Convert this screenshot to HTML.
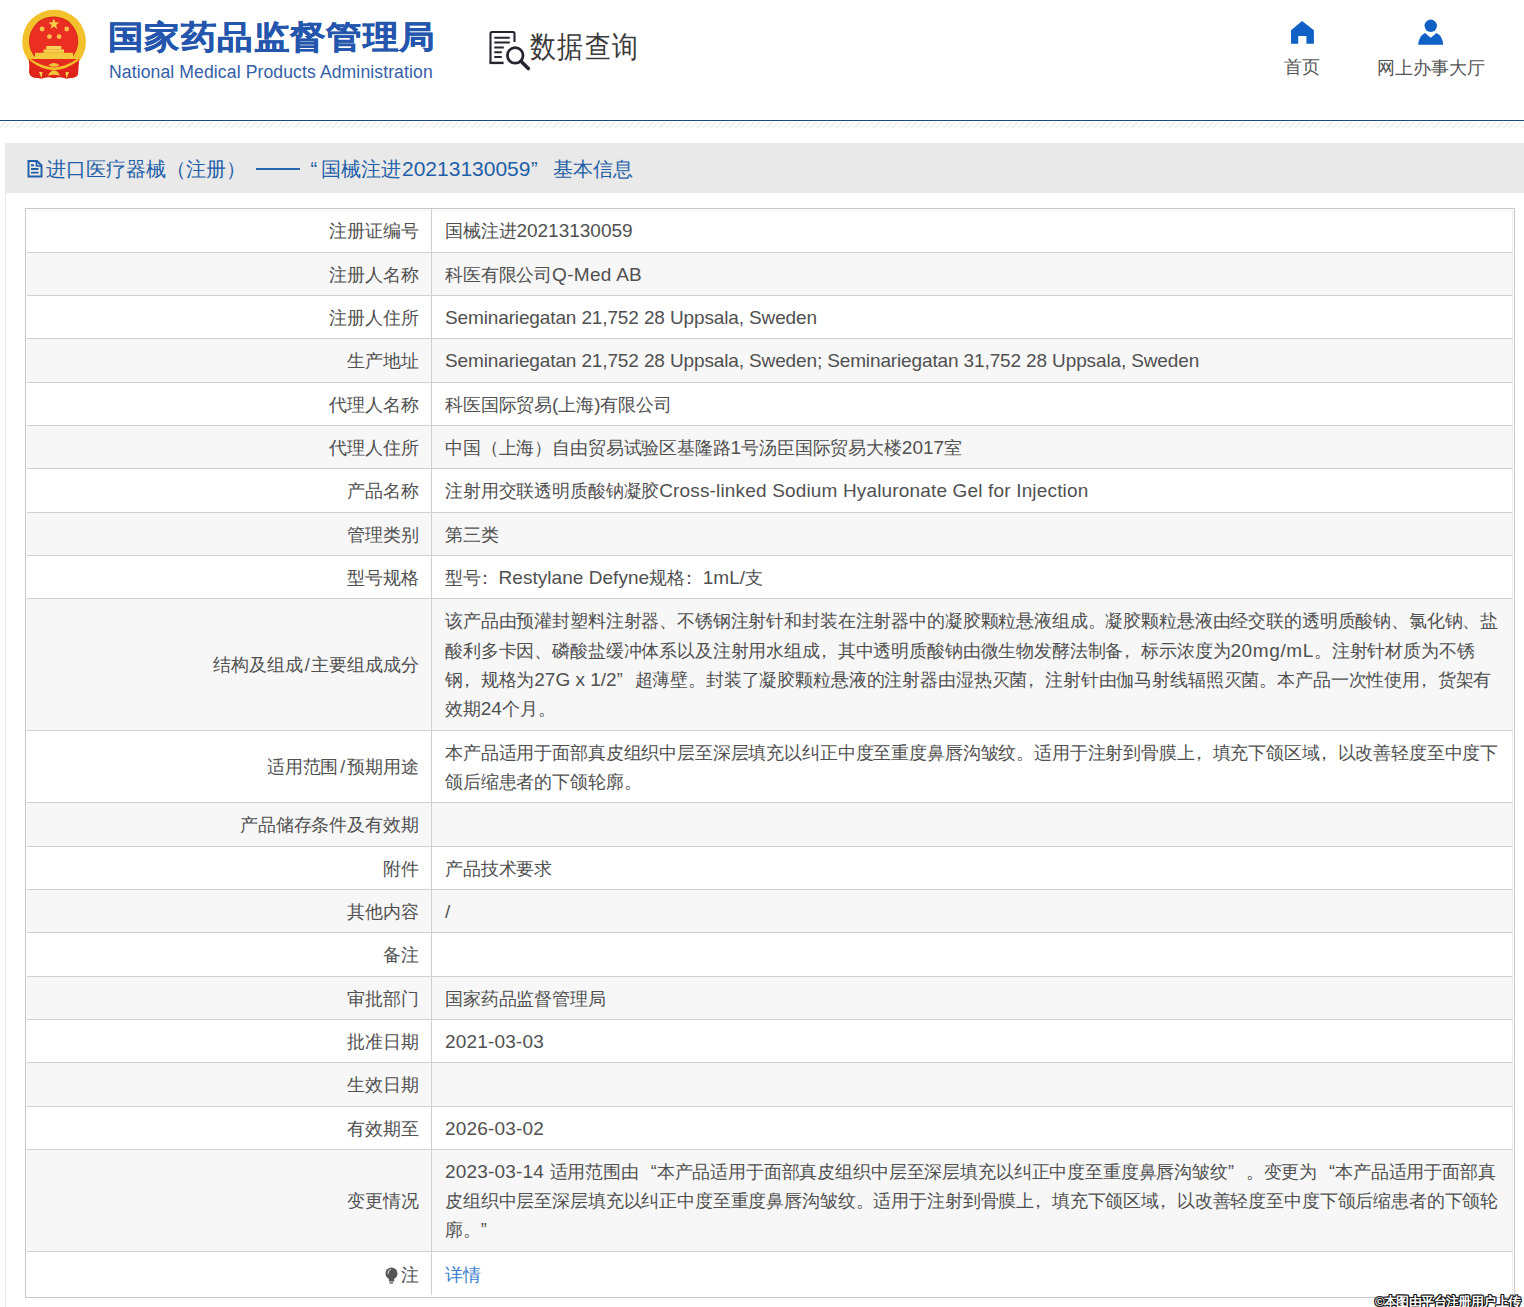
<!DOCTYPE html>
<html><head><meta charset="utf-8">
<style>
html,body{margin:0;padding:0;}
body{width:1524px;height:1307px;overflow:hidden;position:relative;background:#fff;font-family:"Liberation Sans",sans-serif;color:#555;}
.a{position:absolute;white-space:nowrap;}
#brand{left:108px;top:14px;font-size:36px;font-weight:bold;color:#2356ac;line-height:44px;letter-spacing:0.4px;transform:scaleY(0.9);transform-origin:0 33px;-webkit-text-stroke:0.5px #2356ac;}
#brand-en{left:109px;top:61px;font-size:17.6px;letter-spacing:0.1px;color:#3560a8;line-height:22px;}
#dq{left:530px;top:26.6px;font-size:26px;color:#3a3a3a;line-height:40px;letter-spacing:1.3px;transform:scaleY(1.16);transform-origin:0 20px;}
.nav{font-size:18px;color:#555;line-height:22px;}
#stripe{left:0;top:120px;width:1524px;height:1px;background:#1b4a80;}
#hatch{left:0;top:122px;width:1524px;height:6px;background:repeating-linear-gradient(135deg,#fff 0,#fff 2.2px,#f5f2f2 2.2px,#f5f2f2 4.45px);}
#frame{left:5px;top:143px;width:1600px;height:1300px;border-left:1px solid #e8e8e8;}
#bar{left:5px;top:143px;width:1519px;height:50px;background:#e9e9e9;}
.tt{top:154px;font-size:20px;color:#1f5fa8;line-height:30px;}
#tbl{left:25px;top:208px;width:1488px;height:1088px;border:1px solid #c8c8c8;}
.row{position:absolute;left:27px;width:1486px;border-top:1px solid #d0d0d0;border-right:1px solid #ececec;box-sizing:border-box;}
.g{background:#f7f7f7;}
.lab{position:absolute;left:0;width:391.6px;top:2.6px;bottom:0;display:flex;align-items:center;justify-content:flex-end;white-space:nowrap;}
.val{position:absolute;left:418px;top:2.6px;bottom:0;display:flex;align-items:center;white-space:nowrap;}
.row{font-size:18px;letter-spacing:-0.15px;line-height:29.3px;color:#505050;}
#vline{left:431px;top:209px;width:1px;height:1086px;background:#d0d0d0;}
.sl{font-style:normal;margin:0 2px;}
.pl{font-style:normal;position:relative;left:-5px;}
#wm{left:1375px;top:1292.5px;font-size:13px;font-weight:bold;color:#fff;letter-spacing:-0.6px;line-height:18px;text-shadow:1px 0 #111,-1px 0 #111,0 1px #111,0 -1px #111,1px 1px #111,-1px -1px #111,1px -1px #111,-1px 1px #111;}
.en{font-size:19px;letter-spacing:0;line-height:0;}
.lq{display:inline-block;width:17.85px;text-align:right;}
.rq{display:inline-block;width:17.85px;text-align:left;}
</style></head><body>

<!-- emblem -->
<svg class="a" style="left:0;top:0" width="100" height="90" viewBox="0 0 100 90">
  <path d="M30.5 58 L29 72 Q29.5 76.5 34 77.5 L42 78.5 Q48 76 54 78 Q60 76 66 78.5 L74 77.5 Q78.5 76.5 78 72 L77 58 Z" fill="#df2519"/>
  <circle cx="54.1" cy="41.6" r="31.9" fill="#f3c12b"/>
  <circle cx="53.6" cy="41.1" r="24.6" fill="#c8201a"/>
  <circle cx="53.6" cy="41.1" r="23.9" fill="#ea2f22"/>
  <polygon points="53.9,18.4 55.3,22.3 59.4,22.4 56.1,24.9 57.3,28.9 53.9,26.5 50.5,28.9 51.7,24.9 48.4,22.4 52.5,22.3" fill="#f7d04a"/>
  <circle cx="42.1" cy="29" r="2.4" fill="#f6c24c"/><circle cx="66.7" cy="29" r="2.4" fill="#f6c24c"/>
  <circle cx="49.4" cy="36.6" r="2.4" fill="#f6c24c"/><circle cx="59.1" cy="36.6" r="2.4" fill="#f6c24c"/>
  <rect x="46.3" y="46" width="15" height="3.6" fill="#f7d35a"/>
  <rect x="43.5" y="49.4" width="20.5" height="3.4" fill="#f5cf4a"/>
  <rect x="35" y="52.8" width="38" height="6.2" fill="#f3c93e"/>
  <path d="M30.5 58.9 H77 Q66 67.5 54 68 Q42 67.5 30.5 58.9 Z" fill="#e52a1e"/>
  <path d="M29 58 Q41 66.5 54 67.6 Q67 66.5 78.5 58 L77 61.2 Q66 69.8 54 70.2 Q42 69.8 30.6 61.2 Z" fill="#f3c02a"/>
  <path d="M48.5 65.2 Q54 60.6 59.5 65.2 Q54 68.4 48.5 65.2 Z" fill="#f1c53a"/>
  <path d="M28.8 58.6 L30.6 61.2 Q42 69.8 54 70.2 Q66 69.8 77.5 61.2 L79.2 58.6 L78.2 72 Q78 76.5 74 77.5 L66 78.5 Q60 76.5 54 78 Q48 76.5 42 78.5 L34 77.5 Q30 76.5 29.8 72 Z" fill="#df2519"/>
  <path d="M48 75.8 Q50 70.3 54 70.2 Q58 70.3 60 75.8 Q54 73.6 48 75.8 Z" fill="#f4c63e"/>
  <path d="M39 72 L42.5 72 L41.5 78.5 Z M65.5 72 L69 72 L66.5 78.5 Z" fill="#f4d050"/>
</svg>

<div class="a" id="brand">国家药品监督管理局</div>
<div class="a" id="brand-en">National Medical Products Administration</div>

<!-- data query icon -->
<svg class="a" style="left:486px;top:28px" width="48" height="44" viewBox="0 0 48 44">
  <path d="M4.5 35 V5.5 Q4.5 4 6 4 H27 Q28.5 4 28.5 5.5 V14" fill="none" stroke="#24242e" stroke-width="2.1"/>
  <path d="M3.5 34.9 H17.6" stroke="#24242e" stroke-width="2.4"/>
  <path d="M8.3 9.8 H23.8 M8.3 14.6 H23.8 M8.3 19.4 H17.8 M8.3 24.2 H15.8 M8.3 29 H15.8" stroke="#24242e" stroke-width="2"/>
  <circle cx="29.2" cy="27.4" r="7.8" fill="#fff" stroke="#24242e" stroke-width="2.8"/>
  <path d="M35 33.2 L42.3 40.5" stroke="#24242e" stroke-width="3.6" stroke-linecap="round"/>
</svg>
<div class="a" id="dq">数据查询</div>

<!-- nav -->
<svg class="a" style="left:1290px;top:20px" width="25" height="25" viewBox="0 0 25 25">
  <polygon points="1,10.2 12.1,1 23.9,10.2 23.9,23.7 16.4,23.7 16.4,16 8.2,16 8.2,23.7 1,23.7" fill="#1061c6"/>
</svg>
<div class="a nav" style="left:1284px;top:55.7px;">首页</div>
<svg class="a" style="left:1417px;top:18px" width="28" height="28" viewBox="0 0 28 28">
  <circle cx="13.75" cy="7.8" r="6.2" fill="#1061c6"/>
  <path d="M1.2 26.8 Q2 17.5 8 15 L13.75 19.7 L19.5 15 Q25.5 17.5 26.2 26.8 Z" fill="#1061c6"/>
</svg>
<div class="a nav" style="left:1377px;top:56.6px;">网上办事大厅</div>

<div class="a" id="stripe"></div>
<div class="a" id="hatch"></div>
<div class="a" id="frame"></div>
<div class="a" id="bar"></div>
<svg class="a" style="left:26px;top:159px" width="18" height="19" viewBox="0 0 18 19"><path d="M2.5 2 H11 L15.5 6.5 V17.5 H2.5 Z" fill="none" stroke="#1f5fa8" stroke-width="1.9"/><path d="M10.5 2 V7 H15.5" fill="none" stroke="#1f5fa8" stroke-width="1.7"/><path d="M5 6.3 H8 M5 10 H12.5 M5 13.6 H12.5" stroke="#1f5fa8" stroke-width="1.9"/></svg>
<div class="a tt" style="left:45.5px">进口医疗器械（注册）</div>
<div class="a" style="left:256px;top:168px;width:43.5px;height:1.6px;background:#2a66ab"></div>
<div class="a tt" style="left:310.6px">“</div>
<div class="a tt" style="left:321px">国械注进</div>
<div class="a tt" style="left:402px;font-size:21px">20213130059</div>
<div class="a tt" style="left:531px">”</div>
<div class="a tt" style="left:552.6px">基本信息</div>

<div class="a" id="tbl"></div>
<div class="row" style="top:210px;height:42.0px;border-top-color:#f6f6f6"><div class="lab" style="top:0.6px">注册证编号</div><div class="val" style="top:0.6px"><div>国械注进<span class=en>20213130059</span></div></div></div>
<div class="row g" style="top:252px;height:43.0px"><div class="lab">注册人名称</div><div class="val"><div>科医有限公司<span class=en style='letter-spacing:.29px'>Q-Med AB</span></div></div></div>
<div class="row" style="top:295px;height:43.0px"><div class="lab">注册人住所</div><div class="val"><div><span class=en style='letter-spacing:-.13px'>Seminariegatan 21,752 28 Uppsala, Sweden</span></div></div></div>
<div class="row g" style="top:338px;height:44.0px"><div class="lab">生产地址</div><div class="val"><div><span class=en style='letter-spacing:-.13px'>Seminariegatan 21,752 28 Uppsala, Sweden; Seminariegatan 31,752 28 Uppsala, Sweden</span></div></div></div>
<div class="row" style="top:382px;height:43.0px"><div class="lab">代理人名称</div><div class="val"><div>科医国际贸易<span class=en>(</span>上海<span class=en>)</span>有限公司</div></div></div>
<div class="row g" style="top:425px;height:43.0px"><div class="lab">代理人住所</div><div class="val"><div>中国（上海）自由贸易试验区基隆路<span class=en>1</span>号汤臣国际贸易大楼<span class=en>2017</span>室</div></div></div>
<div class="row" style="top:468px;height:44.0px"><div class="lab">产品名称</div><div class="val"><div>注射用交联透明质酸钠凝胶<span class=en style='letter-spacing:.16px'>Cross-linked Sodium Hyaluronate Gel for Injection</span></div></div></div>
<div class="row g" style="top:512px;height:43.0px"><div class="lab">管理类别</div><div class="val"><div>第三类</div></div></div>
<div class="row" style="top:555px;height:43.0px"><div class="lab">型号规格</div><div class="val"><div>型号<i class=pl>：</i><span class=en style='letter-spacing:.04px'>Restylane Defyne</span>规格<i class=pl>：</i><span class=en>1mL/</span>支</div></div></div>
<div class="row g" style="top:598px;height:132.0px"><div class="lab">结构及组成<i class=sl>/</i>主要组成成分</div><div class="val"><div>该产品由预灌封塑料注射器、不锈钢注射针和封装在注射器中的凝胶颗粒悬液组成。凝胶颗粒悬液由经交联的透明质酸钠、氯化钠、盐<br>酸利多卡因、磷酸盐缓冲体系以及注射用水组成<i class=pl>，</i>其中透明质酸钠由微生物发酵法制备<i class=pl>，</i>标示浓度为<span class=en style='letter-spacing:.6px'>20mg/mL</span>。注射针材质为不锈<br>钢<i class=pl>，</i>规格为<span class=en>27G x 1/2</span><span class=rq>”</span>超薄壁。封装了凝胶颗粒悬液的注射器由湿热灭菌<i class=pl>，</i>注射针由伽马射线辐照灭菌。本产品一次性使用<i class=pl>，</i>货架有<br>效期<span class=en>24</span>个月。</div></div></div>
<div class="row" style="top:730px;height:72.0px"><div class="lab">适用范围<i class=sl>/</i>预期用途</div><div class="val"><div>本产品适用于面部真皮组织中层至深层填充以纠正中度至重度鼻唇沟皱纹。适用于注射到骨膜上<i class=pl>，</i>填充下颌区域<i class=pl>，</i>以改善轻度至中度下<br>颌后缩患者的下颌轮廓。</div></div></div>
<div class="row g" style="top:802px;height:44.0px"><div class="lab">产品储存条件及有效期</div><div class="val"><div></div></div></div>
<div class="row" style="top:846px;height:43.0px"><div class="lab">附件</div><div class="val"><div>产品技术要求</div></div></div>
<div class="row g" style="top:889px;height:43.0px"><div class="lab">其他内容</div><div class="val"><div><span class=en>/</span></div></div></div>
<div class="row" style="top:932px;height:44.0px"><div class="lab">备注</div><div class="val"><div></div></div></div>
<div class="row g" style="top:976px;height:43.0px"><div class="lab">审批部门</div><div class="val"><div>国家药品监督管理局</div></div></div>
<div class="row" style="top:1019px;height:43.0px"><div class="lab">批准日期</div><div class="val"><div><span class=en style='letter-spacing:.19px'>2021-03-03</span></div></div></div>
<div class="row g" style="top:1062px;height:44.0px"><div class="lab">生效日期</div><div class="val"><div></div></div></div>
<div class="row" style="top:1106px;height:43.0px"><div class="lab">有效期至</div><div class="val"><div><span class=en style='letter-spacing:.19px'>2026-03-02</span></div></div></div>
<div class="row g" style="top:1149px;height:102.0px"><div class="lab">变更情况</div><div class="val"><div><span class=en style='letter-spacing:.19px'>2023-03-14 </span>适用范围由<span class=lq>“</span>本产品适用于面部真皮组织中层至深层填充以纠正中度至重度鼻唇沟皱纹<span class=rq>”</span>。变更为<span class=lq>“</span>本产品适用于面部真<br>皮组织中层至深层填充以纠正中度至重度鼻唇沟皱纹。适用于注射到骨膜上<i class=pl>，</i>填充下颌区域<i class=pl>，</i>以改善轻度至中度下颌后缩患者的下颌轮<br>廓。<span class=rq>”</span></div></div></div>
<div class="row" style="top:1251px;height:44.0px"><div class="lab" style="top:4.6px"><svg width='13' height='18' viewBox='0 0 13 18' style='margin-right:3px'><circle cx='6.5' cy='6.6' r='6' fill='#555'/><rect x='3.9' y='10' width='5.3' height='4.5' fill='#555'/><rect x='4.5' y='15.3' width='3.6' height='1.3' fill='#555'/><path d='M3 7 Q3 3 6 2' stroke='#fff' stroke-width='0.9' fill='none'/></svg>注</div><div class="val" style="top:4.6px"><div><span style='color:#3a80cf'>详情</span></div></div></div>
<div class="a" id="vline"></div>
<div class="a" id="wm">©本图由平台注册用户上传</div>

</body></html>
